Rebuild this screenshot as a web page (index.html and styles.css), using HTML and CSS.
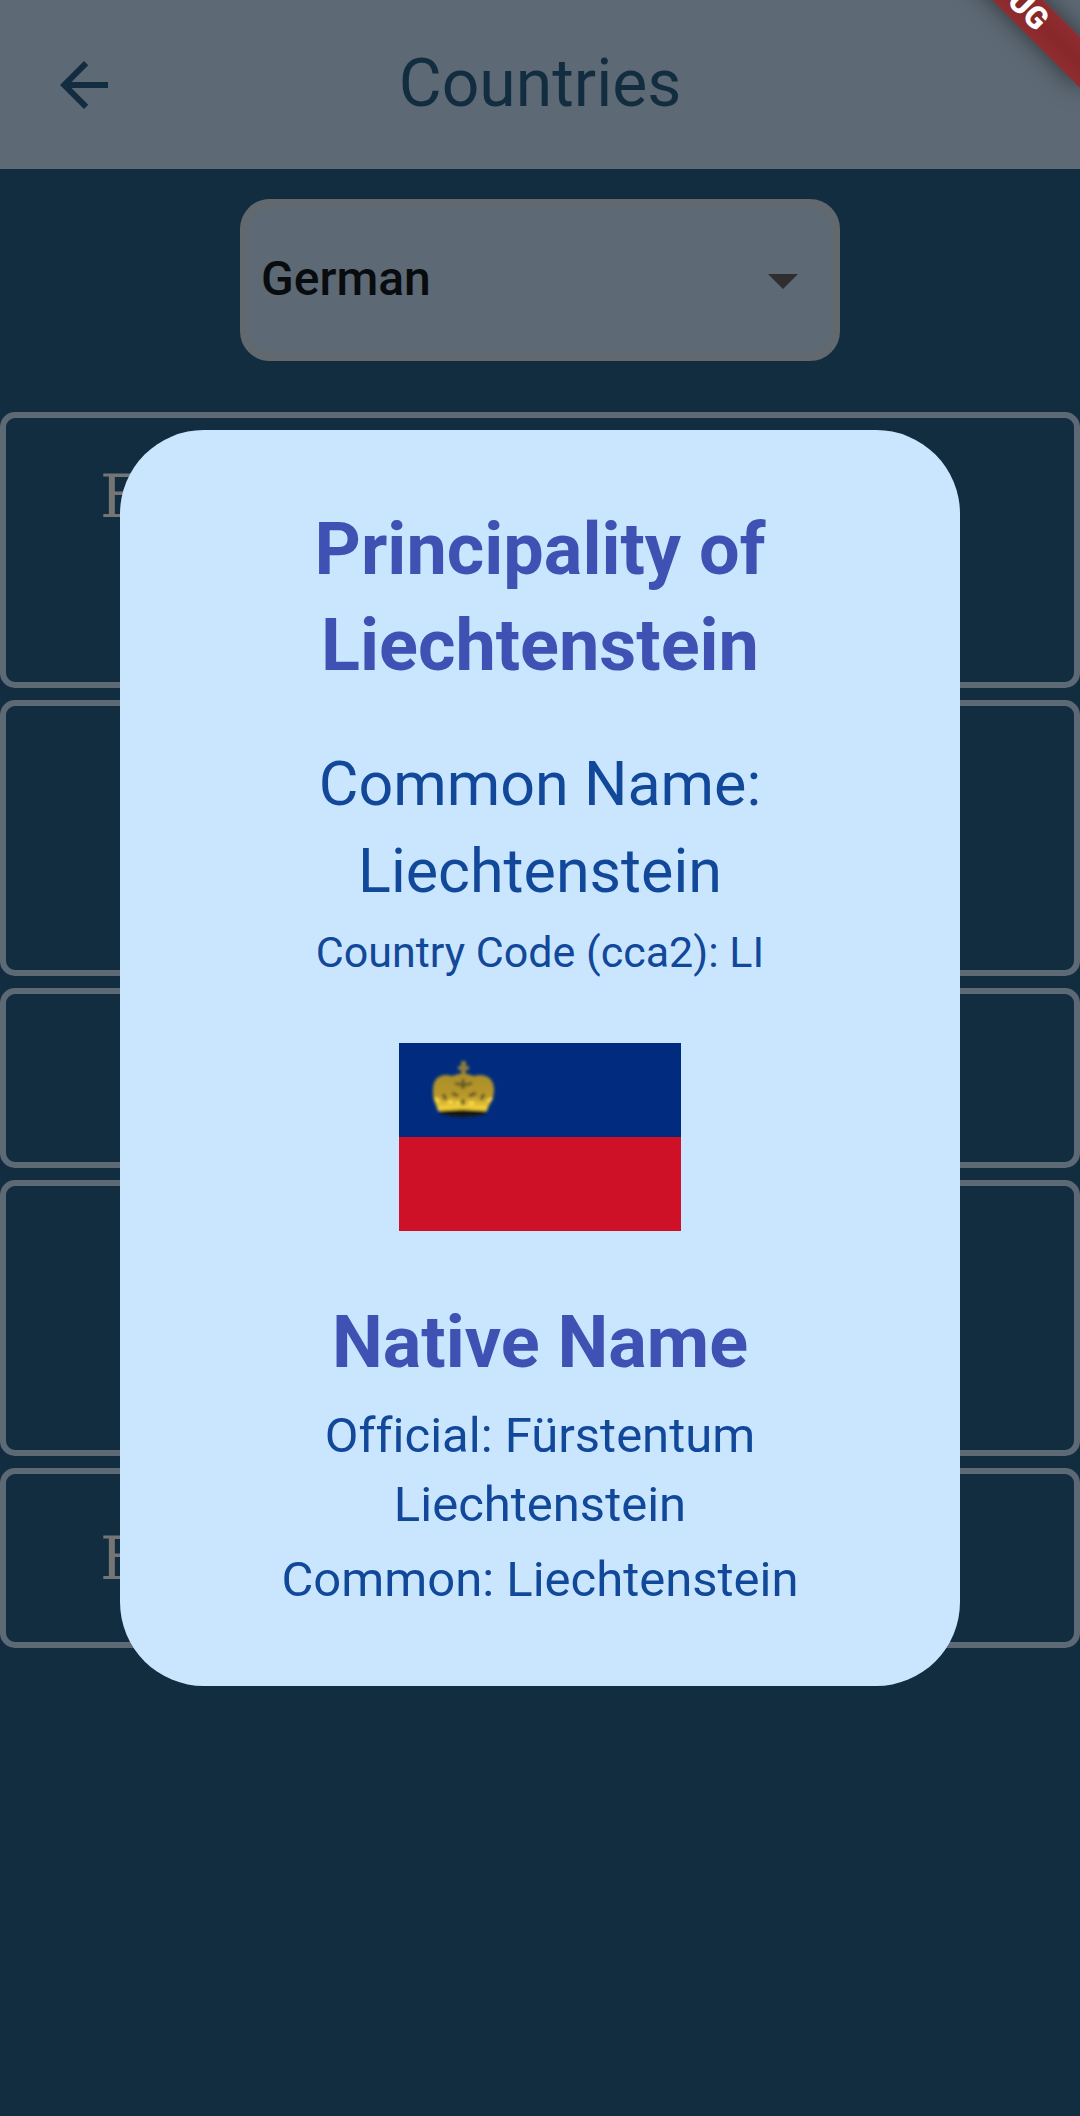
FILE: index.html
```html
<!DOCTYPE html>
<html lang="en">
<head>
<meta charset="utf-8">
<meta name="viewport" content="width=device-width">
<title>Countries</title>
<link rel="stylesheet" href="styles.css">
</head>
<body>
<header class="app-bar">
  <button class="back" type="button" aria-label="Back">
    <svg class="back-icon" viewBox="0 0 24 24" aria-hidden="true"><path d="M20 11H7.83l5.59-5.59L12 4l-8 8 8 8 1.41-1.41L7.83 13H20z"/></svg>
  </button>
  <h1 class="app-title">Countries</h1>
</header>
<div class="ribbon-corner"><div class="ribbon">DEBUG</div></div>
<main class="content">
  <div class="picker">
    <select class="picker-select" aria-label="Language"><option>German</option></select>
    <svg class="picker-arrow" viewBox="0 0 10 5" aria-hidden="true"><path d="M0 0h10L5 5z"/></svg>
  </div>
  <ul class="cards">
    <li class="card card-tall">F</li>
    <li class="card card-tall"></li>
    <li class="card"></li>
    <li class="card card-tall"></li>
    <li class="card">F</li>
  </ul>
</main>
<div class="overlay">
  <section class="dialog" role="dialog" aria-modal="true" aria-labelledby="country">
    <h2 class="heading" id="country">Principality of Liechtenstein</h2>
    <p class="common">Common Name: Liechtenstein</p>
    <p class="code">Country Code (cca2): LI</p>
    <svg class="flag" viewBox="0 0 282 188" role="img" aria-label="Flag of Liechtenstein">
      <defs>
        <linearGradient id="gold" x1="0" y1="0" x2="0" y2="1">
          <stop offset="0" stop-color="#a98d2b"/><stop offset=".6" stop-color="#b9982c"/><stop offset="1" stop-color="#ffdc3c"/>
        </linearGradient>
        <filter id="soft" x="-10%" y="-10%" width="120%" height="120%"><feGaussianBlur stdDeviation="1.4"/></filter>
      </defs>
      <path fill="#002b7f" d="M0 0h282v94H0z"/>
      <path fill="#ce1126" d="M0 94h282v94H0z"/>
      <g filter="url(#soft)">
        <path fill="#17180f" d="M39 65q25-4 50 0l-3 6q-22 6-44 0z"/>
        <path fill="#8d7c3c" d="M62 35V27h-3v-4h3v-5h5v5h3v4h-3v8z"/>
        <path fill="url(#gold)" d="M39 68C38 62 33 57 34 47 34 34 43 30 53 33q11-5 22 0c10-3 20 1 20 14 0 10-6 15-7 21q-25-3-49 0z"/>
        <path fill="none" stroke="#5d5423" stroke-width="3" d="M64 36v10M56 40q8 4 17 0M53 50l6 3M70 53l7-3M64 56v6M44 51l3 6M85 51l-3 6"/>
        <path fill="none" stroke="#ffe14a" stroke-width="3" d="M36 55l4 4M93 55l-4 4M49 59h5M57 60h3M70 60h5"/>
      </g>
    </svg>
    <h3 class="heading">Native Name</h3>
    <p class="native">Official: Fürstentum Liechtenstein</p>
    <p class="native native-common">Common: Liechtenstein</p>
  </section>
</div>
</body>
</html>
```
FILE: styles.css
```css
* { box-sizing: border-box; }

body {
  margin: 0;
  min-height: 100vh;
  background: #132d40;
  font-family: Roboto, "Liberation Sans", sans-serif;
}

h1, h2, h3, p, ul { margin: 0; padding: 0; }

.app-bar {
  display: grid;
  grid-template-columns: 168px 1fr 168px;
  align-items: center;
  height: 169px;
  background: #5d6974;
  color: #132d40;
}

.back {
  display: grid;
  place-items: center;
  width: 168px;
  height: 168px;
  padding: 0;
  border: 0;
  background: none;
}

.back-icon { width: 72px; height: 72px; fill: #132d40; }

.app-title {
  padding-bottom: 2px;
  font-size: 66px;
  line-height: 84px;
  font-weight: 400;
  text-align: center;
}

/* Corner banner: clipped at the page's top right */
.ribbon-corner {
  position: absolute;
  top: 0;
  right: 0;
  width: 168px;
  height: 168px;
  overflow: hidden;
}

.ribbon {
  position: absolute;
  top: 2px;
  right: -120px;
  width: 240px;
  height: 36px;
  transform: rotate(45deg);
  transform-origin: 120px -84px;
  background: linear-gradient(#8f2c30, #88282a 50%, #8f2c30);
  box-shadow: 0 0 24px rgba(0, 0, 0, .5);
  color: #fff;
  font-size: 31px;
  line-height: 36px;
  font-weight: 900;
  text-align: center;
}

.content { padding-top: 30px; }

.picker {
  display: grid;
  align-items: center;
  width: 600px;
  max-width: 100%;
  margin: 0 auto 51px;
}

.picker-select {
  grid-area: 1 / 1;
  width: 100%;
  height: 162px;
  padding: 0 12px 3px;
  border: 9px solid #61696f;
  border-radius: 30px;
  background: #5d6974;
  color: #090c0e;
  font: 500 48px/72px Roboto, "Liberation Sans", sans-serif;
  appearance: none;
}

.picker-arrow {
  grid-area: 1 / 1;
  justify-self: end;
  width: 30px;
  height: 15px;
  margin: 2px 42px 0 0;
  fill: #2e2e2e;
  pointer-events: none;
}

.cards {
  display: grid;
  gap: 12px;
  list-style: none;
}

.card {
  min-height: 180px;
  padding: 36px 94px;
  border: 6px solid #5d6974;
  border-radius: 15px;
  color: #757575;
  font: 60px/96px "DejaVu Serif", serif;
}

.card-tall { min-height: 276px; padding-top: 30px; }

.overlay {
  position: absolute;
  inset: 0;
  display: grid;
  place-items: center;
  padding: 0 120px;
}

.dialog {
  display: flex;
  flex-direction: column;
  align-items: center;
  width: 100%;
  padding: 72px;
  border-radius: 84px;
  background: #cae6ff;
  color: #12489a;
  text-align: center;
  font-variant-ligatures: none;
}

.heading {
  max-width: 600px;
  color: #3f51b2;
  font-size: 72px;
  line-height: 96px;
  font-weight: 700;
}

.common { margin-top: 47px; font-size: 61px; line-height: 87px; }

.code { margin-top: 7px; font-size: 43px; line-height: 60px; }

.flag { width: 282px; height: 188px; margin: 61px 0 64px; }

.native { margin-top: 10px; font-size: 49px; line-height: 69px; }

.native-common { margin-top: 6px; }
```
